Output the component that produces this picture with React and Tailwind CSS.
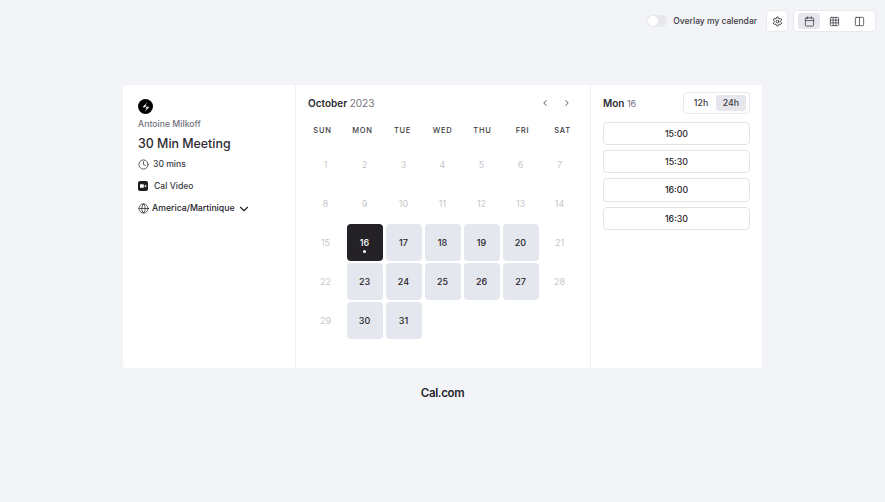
import React from 'react';
import { Calendar, ChevronDown, ChevronLeft, ChevronRight, Clock, Columns2, Globe, Grid3x3, Settings } from 'lucide-react';

const weekdays = ['SUN', 'MON', 'TUE', 'WED', 'THU', 'FRI', 'SAT'];
const available = [16, 17, 18, 19, 20, 23, 24, 25, 26, 27, 30, 31];
const slots = ['15:00', '15:30', '16:00', '16:30'];

const DayCell = ({ day }) => {
  if (day === 16) {
    return (
      <div className="relative flex h-[37px] w-[36px] items-center justify-center rounded-[4px] bg-[#242226] text-[9px] font-[450] text-white">
        16
        <span className="absolute bottom-[8px] h-[3px] w-[3px] rounded-full bg-white"></span>
      </div>
    );
  }
  if (available.includes(day)) {
    return (
      <div className="flex h-[37px] w-[36px] items-center justify-center rounded-[4px] bg-[#e5e7ee] text-[9px] font-[450] text-[#25232a]">
        {day}
      </div>
    );
  }
  return <div className="flex h-[37px] w-[36px] items-center justify-center text-[9px] text-[#c6c7cc]">{day}</div>;
};

const App = () => {
  const days = Array.from({ length: 31 }, (_, i) => i + 1);

  return (
    <div className="flex h-[502px] w-full flex-col items-center bg-[#f3f4f8] font-['Inter',sans-serif] text-[#25232a]">
      {/* Top bar */}
      <div className="flex h-[85px] w-full items-start justify-end gap-[5px] pt-[10px] pr-[9px]">
        <div className="mr-[4px] flex h-[22px] items-center gap-[6px]">
          <div className="flex h-[12px] w-[20px] items-center rounded-full bg-[#e7e8ee] pl-[1px]">
            <span className="h-[10px] w-[10px] rounded-full bg-white"></span>
          </div>
          <span className="text-[8.5px] font-[450] text-[#3b3a42]">Overlay my calendar</span>
        </div>
        <div className="flex h-[22px] w-[22px] items-center justify-center rounded-[4px] border border-[#e8e9ee] bg-white">
          <Settings size={11} strokeWidth={2} color="#33323a" />
        </div>
        <div className="flex h-[22px] w-[83px] items-center gap-[3px] rounded-[4px] border border-[#e8e9ee] bg-white px-[4px]">
          <div className="flex h-[16px] w-[23px] items-center justify-center rounded-[3px] bg-[#e6e7ed]">
            <Calendar size={11} strokeWidth={1.6} color="#33323a" />
          </div>
          <div className="flex h-[16px] w-[23px] items-center justify-center">
            <Grid3x3 size={11} strokeWidth={1.6} color="#33323a" />
          </div>
          <div className="flex h-[16px] w-[23px] items-center justify-center">
            <Columns2 size={11} strokeWidth={1.6} color="#33323a" />
          </div>
        </div>
      </div>

      {/* Booker card */}
      <div className="flex h-[283px] w-[639px] rounded-[3px] bg-white">
        <aside className="w-[173px] shrink-0 border-r border-[#eeeff3] pt-[14px] pl-[15px]">
          <div className="flex h-[15px] w-[15px] items-center justify-center rounded-full bg-black">
            <svg width="12" height="12" viewBox="0 0 24 24" fill="white">
              <path d="M15 2 5 12.500h5l3.500-3.500H10.500l4.500-7zM9 22l10-10.500h-5l-3.500 3.500h3l-4.500 7z" />
            </svg>
          </div>
          <p className="mt-[3px] text-[8.7px] leading-[14px] font-[450] text-[#72717c]">Antoine Milkoff</p>
          <h1 className="mt-[4px] text-[12.4px] leading-[18px] font-[550] text-[#2c2b32]">30 Min Meeting</h1>
          <div className="flex h-[22px] items-center gap-[4px] text-[8.6px] font-[450] text-[#3b3a42]">
            <Clock size={11} strokeWidth={1.8} />
            30 mins
          </div>
          <div className="flex h-[22px] items-center gap-[6px] text-[8.6px] font-[450] text-[#3b3a42]">
            <svg width="10" height="10" viewBox="0 0 10 10">
              <rect width="10" height="10" rx="2" fill="#1e1d22" />
              <rect x="2" y="3.2" width="3.800" height="3.600" rx="0.600" fill="white" />
              <path d="M6.200 4.900 8.200 3.400v3.200z" fill="white" />
            </svg>
            Cal Video
          </div>
          <div className="flex h-[23px] items-center gap-[3px] text-[8.7px] leading-none font-medium text-[#25232a]">
            <Globe size={11} strokeWidth={1.6} />
            America/Martinique
            <ChevronDown size={14} strokeWidth={2} className="ml-[-1px]" />
          </div>
        </aside>

        <main className="w-[295px] shrink-0 border-r border-[#eeeff3] px-[10px] pt-[10px]">
          <div className="flex h-[16px] items-center justify-between pr-[8px] pl-[2px]">
            <p className="text-[10px] font-semibold text-[#2c2b32]">
              October <span className="font-normal text-[#75747e]">2023</span>
            </p>
            <div className="flex items-center gap-[12px]">
              <ChevronLeft size={10} strokeWidth={2} color="#3b3a42" />
              <ChevronRight size={10} strokeWidth={2} color="#3b3a42" />
            </div>
          </div>
          <div className="mt-[5px] ml-[-3.5px] grid grid-cols-[repeat(7,40px)]">
            {weekdays.map((d) => (
              <div key={d} className="flex h-[30px] items-center justify-center text-[7.5px] font-medium tracking-[0.1em] text-[#3b3a42]">
                {d}
              </div>
            ))}
          </div>
          <div className="mt-[-1px] grid grid-cols-[repeat(7,39px)] auto-rows-[39px] place-items-center">
            {days.map((d) => (
              <DayCell key={d} day={d} />
            ))}
          </div>
        </main>

        <aside className="flex-1 px-[12px] pt-[7px]">
          <div className="flex h-[22px] items-center justify-between">
            <p className="text-[10px] font-semibold text-[#2c2b32]">
              Mon <span className="text-[9px] font-normal text-[#6f6e78]">16</span>
            </p>
            <div className="flex h-[22px] w-[67px] items-center rounded-[4px] border border-[#e8e9ee] py-[2px] pr-[3px] pl-[2px] text-[8.800px] font-[450] text-[#3b3a42]">
              <span className="flex h-full flex-1 items-center justify-center">12h</span>
              <span className="flex h-full flex-1 items-center justify-center rounded-[3px] bg-[#e6e7ed]">24h</span>
            </div>
          </div>
          <div className="mt-[7.500px] flex flex-col gap-[5px]">
            {slots.map((s) => (
              <div key={s} className="flex h-[23.400px] items-center justify-center rounded-[4px] border border-[#e3e4e9] text-[8.800px] font-[450] text-[#25232a]">
                {s}
              </div>
            ))}
          </div>
        </aside>
      </div>

      <p className="mt-[16px] text-[11.500px] leading-[18px] font-semibold tracking-[-0.03em] text-[#25232a]">Cal.com</p>
    </div>
  );
};

export default App;
